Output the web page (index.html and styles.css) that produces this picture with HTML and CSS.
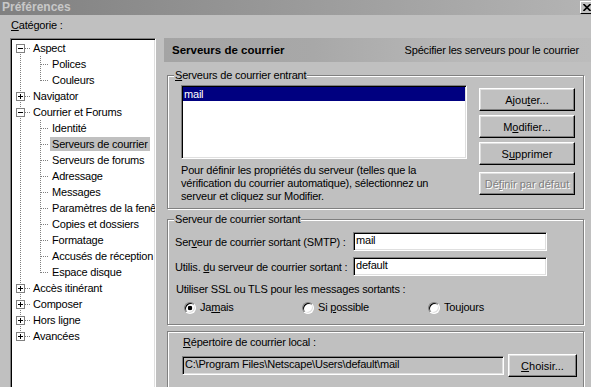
FILE: index.html
```html
<!DOCTYPE html>
<html lang="fr">
<head>
  <meta charset="UTF-8" />
  <title>Préférences</title>
  <link rel="stylesheet" href="styles.css">
</head>
<body>
  <div class="window">
    <div class="titlebar">
      <span class="title">Préférences</span>
      <span class="close">
        <svg width="8" height="7" viewBox="0 0 8 7"><path d="M0.5 0 L7.5 7 M7.5 0 L0.5 7" stroke="#000" stroke-width="1.6" fill="none"/></svg>
      </span>
    </div>

    <div class="main">
      <div class="sidebar">
        <div class="cat-label"><u>C</u>atégorie :</div>
        <div class="tree">
          <div class="row"><span class="g0 x first"><span class="box minus"></span></span><span class="label">Aspect</span></div>
          <div class="row"><span class="g0 v"></span><span class="g1 t"></span><span class="label">Polices</span></div>
          <div class="row"><span class="g0 v"></span><span class="g1 l"></span><span class="label">Couleurs</span></div>
          <div class="row"><span class="g0 x"><span class="box plus"></span></span><span class="label">Navigator</span></div>
          <div class="row"><span class="g0 x"><span class="box minus"></span></span><span class="label">Courrier et Forums</span></div>
          <div class="row"><span class="g0 v"></span><span class="g1 t"></span><span class="label">Identité</span></div>
          <div class="row"><span class="g0 v"></span><span class="g1 t"></span><span class="label sel">Serveurs de courrier</span></div>
          <div class="row"><span class="g0 v"></span><span class="g1 t"></span><span class="label">Serveurs de forums</span></div>
          <div class="row"><span class="g0 v"></span><span class="g1 t"></span><span class="label">Adressage</span></div>
          <div class="row"><span class="g0 v"></span><span class="g1 t"></span><span class="label">Messages</span></div>
          <div class="row"><span class="g0 v"></span><span class="g1 t"></span><span class="label">Paramètres de la fenêtre</span></div>
          <div class="row"><span class="g0 v"></span><span class="g1 t"></span><span class="label">Copies et dossiers</span></div>
          <div class="row"><span class="g0 v"></span><span class="g1 t"></span><span class="label">Formatage</span></div>
          <div class="row"><span class="g0 v"></span><span class="g1 t"></span><span class="label">Accusés de réception</span></div>
          <div class="row"><span class="g0 v"></span><span class="g1 l"></span><span class="label">Espace disque</span></div>
          <div class="row"><span class="g0 x"><span class="box plus"></span></span><span class="label">Accès itinérant</span></div>
          <div class="row"><span class="g0 x"><span class="box plus"></span></span><span class="label">Composer</span></div>
          <div class="row"><span class="g0 x"><span class="box plus"></span></span><span class="label">Hors ligne</span></div>
          <div class="row"><span class="g0 x last"><span class="box plus"></span></span><span class="label">Avancées</span></div>
        </div>
      </div>

      <div class="panel">
        <div class="panel-head">
          <b>Serveurs de courrier</b>
          <span>Spécifier les serveurs pour le courrier</span>
        </div>

        <div class="group group-in">
          <div class="group-title"><u>S</u>erveurs de courrier entrant</div>
          <div class="in-body">
            <div class="in-left">
              <div class="listbox">
                <div class="lb-item sel">mail</div>
              </div>
              <p class="hint">Pour définir les propriétés du serveur (telles que la<br>vérification du courrier automatique), sélectionnez un<br>serveur et cliquez sur Modifier.</p>
            </div>
            <div class="btns">
              <button class="btn">Ajou<u>t</u>er...</button>
              <button class="btn">M<u>o</u>difier...</button>
              <button class="btn">S<u>u</u>pprimer</button>
              <button class="btn disabled">Dé<u>f</u>inir par défaut</button>
            </div>
          </div>
        </div>

        <div class="group group-out">
          <div class="group-title">Serveur de courrier sortant</div>
          <div class="field">
            <span class="field-label">Ser<u>v</u>eur de courrier sortant (SMTP) :</span>
            <span class="input">mail</span>
          </div>
          <div class="field">
            <span class="field-label">Utilis. <u>d</u>u serveur de courrier sortant :</span>
            <span class="input">default</span>
          </div>
          <div class="ssl-label">Utiliser SSL ou TLS pour les messages sortants :</div>
          <div class="radios">
            <span class="radio r-never"><span class="dot on"></span><span>Ja<u>m</u>ais</span></span>
            <span class="radio r-maybe"><span class="dot"></span><span>Si <u>p</u>ossible</span></span>
            <span class="radio"><span class="dot"></span><span>Toujours</span></span>
          </div>
        </div>

        <div class="group group-local">
          <div class="local-label"><u>R</u>épertoire de courrier local :</div>
          <div class="local-row">
            <span class="input readonly">C:\Program Files\Netscape\Users\default\mail</span>
            <button class="btn btn-choose"><u>C</u>hoisir...</button>
          </div>
        </div>
      </div>
    </div>
  </div>
</body>
</html>
```

FILE: styles.css
```css
body {
  margin: 0;
  font-family: "Liberation Sans", Arial, sans-serif;
  font-size: 11px;
  letter-spacing: -0.2px;
  color: #000;
  --dv: repeating-linear-gradient(to bottom, #808080 0 1px, transparent 1px 2px);
  --dh: repeating-linear-gradient(to right, #808080 0 1px, transparent 1px 2px);
}

u {
  text-underline-offset: 1px;
}

.window {
  width: 591px;
  height: 387px;
  background: #c0c0c0;
  overflow: hidden;
}

/* Title bar (inactive window) */
.titlebar {
  height: 15px;
  display: flex;
  align-items: center;
  justify-content: space-between;
  padding-left: 2px;
  background: linear-gradient(to right, #808080, #b4b4b4);
}

.title {
  font-weight: bold;
  font-size: 12px;
  letter-spacing: 0;
  line-height: 15px;
  color: #c8c8c8;
}

.close {
  width: 16px;
  height: 13px;
  margin-right: -5px;
  box-sizing: border-box;
  display: flex;
  align-items: center;
  justify-content: center;
  padding-right: 2px;
  background: #c0c0c0;
  border: 1px solid;
  border-color: #fff #000 #000 #fff;
}

.main {
  display: flex;
}

/* Category tree */
.sidebar {
  flex: none;
  width: 146px;
  margin-left: 10px;
}

.cat-label {
  line-height: 13px;
  margin: 4px 0 6px;
  padding-left: 1px;
}

.tree {
  height: 360px;
  box-sizing: border-box;
  padding: 1px;
  background: #fff;
  border: 1px solid;
  border-color: #808080 #fff #fff #808080;
  box-shadow: inset 1px 1px #000, inset -1px -1px #dfdfdf;
  overflow: hidden;
}

.row {
  display: flex;
  align-items: center;
  height: 16px;
  white-space: nowrap;
}

.g0, .g1 {
  flex: none;
  height: 16px;
  background-repeat: no-repeat;
}

.g0 { width: 18px; }
.g1 { width: 19px; }

.g0.v {
  background-image: var(--dv);
  background-size: 1px 16px;
  background-position: 8px 0;
}

.g0.x {
  display: flex;
  align-items: flex-start;
  background-image: var(--dv), var(--dh);
  background-size: 1px 16px, 5px 1px;
  background-position: 8px 0, 13px 8px;
}

.g0.x.first {
  background-size: 1px 8px, 5px 1px;
  background-position: 8px 8px, 13px 8px;
}

.g0.x.last {
  background-size: 1px 8px, 5px 1px;
  background-position: 8px 0, 13px 8px;
}

.g1.t {
  background-image: var(--dv), var(--dh);
  background-size: 1px 16px, 8px 1px;
  background-position: 10px 0, 11px 8px;
}

.g1.l {
  background-image: var(--dv), var(--dh);
  background-size: 1px 9px, 8px 1px;
  background-position: 10px 0, 11px 8px;
}

.box {
  width: 9px;
  height: 9px;
  margin: 4px 0 0 4px;
  box-sizing: border-box;
  border: 1px solid #808080;
  background-color: #fff;
  background-repeat: no-repeat;
  background-position: center;
}

.box.minus {
  background-image: linear-gradient(#000, #000);
  background-size: 5px 1px;
}

.box.plus {
  background-image: linear-gradient(#000, #000), linear-gradient(#000, #000);
  background-size: 5px 1px, 1px 5px;
}

.label {
  margin-left: 1px;
  padding: 0 2px;
  line-height: 14px;
}

.label.sel {
  background: #c0c0c0;
}

/* Right panel */
.panel {
  flex: 1;
  margin-left: 8px;
  padding-top: 23px;
}

.panel-head {
  height: 24px;
  display: flex;
  align-items: center;
  justify-content: space-between;
  padding: 0 12px 0 8px;
  background: linear-gradient(to right, #a4a4a4 0%, #a8a8a8 35%, #b8b8b8 70%, #bcbcbc 100%);
}

.panel-head b {
  font-size: 11.5px;
  letter-spacing: 0;
}

.group {
  width: 417px;
  margin-left: 3px;
  box-sizing: border-box;
  border: 1px solid #808080;
  box-shadow: inset 1px 1px #fff, 1px 1px #fff;
}

.group-title {
  width: max-content;
  margin: -7px 0 0 6px;
  padding: 0 1px;
  line-height: 13px;
  background: #c0c0c0;
}

.group-in {
  margin-top: 13px;
}

.in-body {
  display: flex;
  padding: 3px 8px 5px 13px;
}

.in-left {
  width: 286px;
}

.listbox {
  height: 74px;
  box-sizing: border-box;
  padding: 1px;
  background: #fff;
  border: 1px solid;
  border-color: #808080 #fff #fff #808080;
  box-shadow: inset 1px 1px #000, inset -1px -1px #dfdfdf;
}

.lb-item {
  line-height: 14px;
  padding-left: 1px;
}

.lb-item.sel {
  background: #000080;
  color: #fff;
}

.hint {
  margin: 5px 0 0;
  line-height: 13px;
}

.btns {
  display: flex;
  flex-direction: column;
  width: 96px;
  margin: 3px 0 0 12px;
}

.btn {
  height: 23px;
  padding: 0;
  box-sizing: border-box;
  font: inherit;
  color: #000;
  background: #c0c0c0;
  border: 1px solid;
  border-color: #fff #000 #000 #fff;
  box-shadow: inset -1px -1px #808080, inset 1px 1px #dfdfdf;
}

.btns .btn + .btn {
  margin-top: 4px;
}

.btns .btn.disabled {
  margin-top: 7px;
  color: #808080;
  text-shadow: 1px 1px #fff;
}

/* Outgoing server */
.group-out {
  margin-top: 10px;
  padding-bottom: 10px;
}

.field {
  display: flex;
  align-items: center;
  margin-top: 6px;
  padding-left: 7px;
}

.field-label {
  width: 178px;
}

.input {
  width: 194px;
  height: 19px;
  box-sizing: border-box;
  padding-left: 2px;
  line-height: 15px;
  background: #fff;
  border: 1px solid;
  border-color: #808080 #fff #fff #808080;
  box-shadow: inset 1px 1px #000, inset -1px -1px #dfdfdf;
  white-space: nowrap;
}

.ssl-label {
  margin-top: 7px;
  padding-left: 8px;
  line-height: 13px;
}

.radios {
  display: flex;
  align-items: center;
  margin-top: 5px;
  padding-left: 16px;
  line-height: 13px;
}

.radio {
  display: flex;
  align-items: center;
  gap: 4px;
}

.r-never { width: 118px; }
.r-maybe { width: 126px; }

.dot {
  width: 12px;
  height: 12px;
  box-sizing: border-box;
  border-radius: 50%;
  background: #fff;
  border: 1px solid;
  border-color: #808080 #fff #fff #808080;
  box-shadow: inset 1px 1px #000, inset -1px -1px #dfdfdf;
}

.dot.on {
  background: radial-gradient(circle, #000 0 2px, #fff 2.6px);
}

/* Local folder */
.group-local {
  margin-top: 6px;
  padding: 4px 0 12px;
}

.local-label {
  padding-left: 15px;
  line-height: 13px;
}

.local-row {
  display: flex;
  align-items: center;
  gap: 4px;
  margin-top: 5px;
  padding-left: 14px;
}

.input.readonly {
  width: 322px;
  background: #c0c0c0;
}

.btn-choose {
  width: 69px;
}
```
